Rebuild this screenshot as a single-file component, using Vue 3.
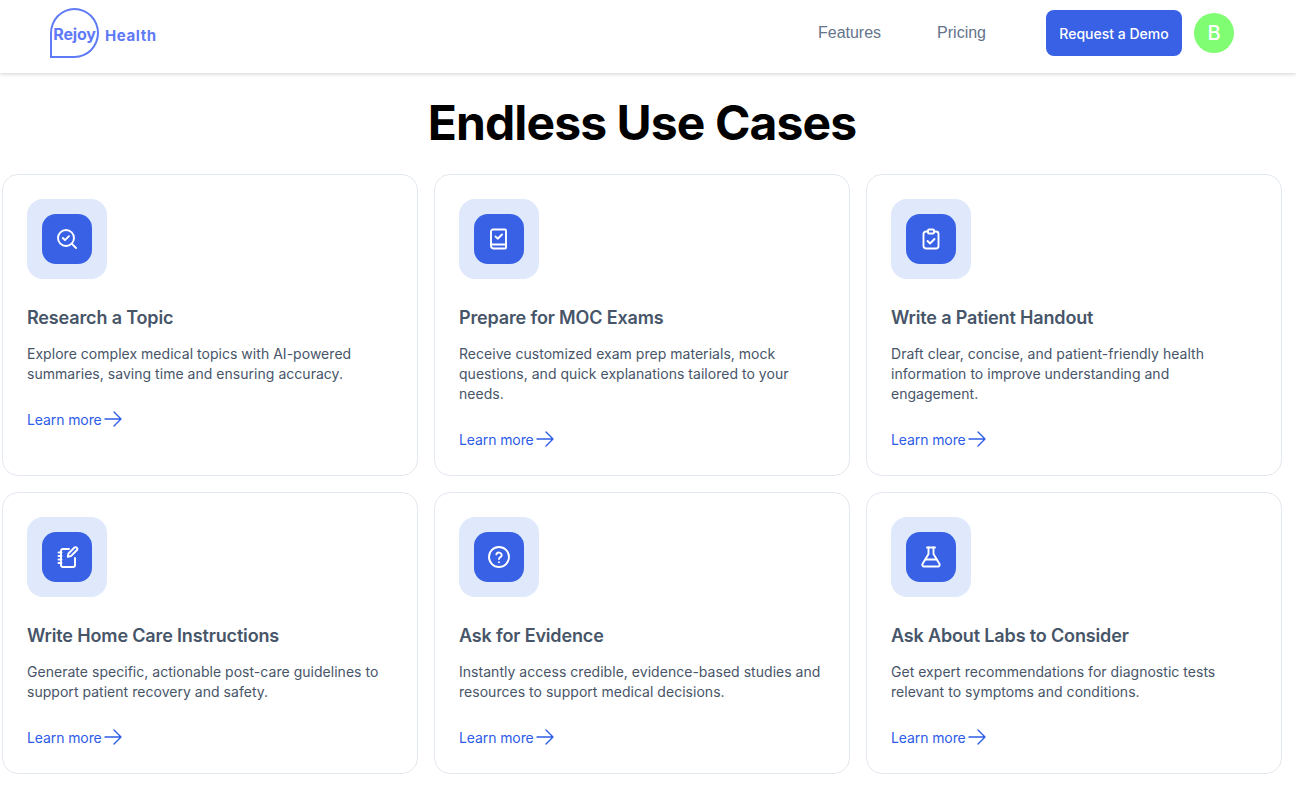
<template>
  <div class="page">
    <header class="navbar">
      <a class="logo">
        <span class="bubble"><span class="bubble-text">Rejoy</span></span>
        <span class="logo-health">Health</span>
      </a>
      <nav class="links">
        <a>Features</a>
        <a>Pricing</a>
      </nav>
      <button class="demo-btn">Request a Demo</button>
      <span class="avatar">B</span>
    </header>

    <h1>Endless Use Cases</h1>

    <section class="cards">
      <article v-for="card in cards" :key="card.title" class="card">
        <div class="icon-outer">
          <div class="icon-inner">
            <svg width="24" height="24" viewBox="0 0 24 24" fill="none" stroke="#fff" stroke-width="1.9" stroke-linecap="round" stroke-linejoin="round">
              <path v-for="d in card.icon" :key="d" :d="d" />
            </svg>
          </div>
        </div>
        <h3>{{ card.title }}</h3>
        <p>{{ card.text }}</p>
        <a class="learn">
          Learn more
          <svg width="18" height="16" viewBox="0 0 18 16" fill="none" stroke="#2f5ce8" stroke-width="1.4" stroke-linecap="round" stroke-linejoin="round">
            <path d="M1 8h16M10 1l7 7-7 7" />
          </svg>
        </a>
      </article>
    </section>
  </div>
</template>

<script setup>
const cards = [
  {
    title: 'Research a Topic',
    text: 'Explore complex medical topics with AI-powered summaries, saving time and ensuring accuracy.',
    icon: [
      'M11 3a8 8 0 1 0 0 16 8 8 0 0 0 0-16z',
      'M21 21l-4.300-4.300',
      'M7.800 11l2.200 2.200 4-4'
    ]
  },
  {
    title: 'Prepare for MOC Exams',
    text: 'Receive customized exam prep materials, mock questions, and quick explanations tailored to your needs.',
    icon: [
      'M6 2.500h12a1 1 0 0 1 1 1v17a1 1 0 0 1-1 1H6.500A2.500 2.500 0 0 1 4 19V4.500a2 2 0 0 1 2-2z',
      'M4 17.500h15',
      'M8.500 9.500l2.200 2.200 4.300-4.200'
    ]
  },
  {
    title: 'Write a Patient Handout',
    text: 'Draft clear, concise, and patient-friendly health information to improve understanding and engagement.',
    icon: [
      'M9 4.500H7a2.500 2.500 0 0 0-2.500 2.500v12A2.500 2.500 0 0 0 7 21.500h10a2.500 2.500 0 0 0 2.500-2.500V7A2.500 2.500 0 0 0 17 4.500h-2',
      'M10 2.500h4a1 1 0 0 1 1 1v2a1 1 0 0 1-1 1h-4a1 1 0 0 1-1-1v-2a1 1 0 0 1 1-1z',
      'M8.500 14l2.500 2.500 4.500-4.500'
    ]
  },
  {
    title: 'Write Home Care Instructions',
    text: 'Generate specific, actionable post-care guidelines to support patient recovery and safety.',
    icon: [
      'M14 4H8a2 2 0 0 0-2 2v14a2 2 0 0 0 2 2h10a2 2 0 0 0 2-2v-7',
      'M3.500 7.500h3M3.500 11h3M3.500 14.500h3M3.500 18h3',
      'M19.500 2.500a1.800 1.800 0 0 1 2.500 2.500l-6 6-3.300.8.800-3.300z'
    ]
  },
  {
    title: 'Ask for Evidence',
    text: 'Instantly access credible, evidence-based studies and resources to support medical decisions.',
    icon: [
      'M12 2a10 10 0 1 0 0 20 10 10 0 0 0 0-20z',
      'M9.300 9.300a2.800 2.800 0 0 1 5.400.9c0 1.800-2.700 2.300-2.700 3.800',
      'M12 17.200v.1'
    ]
  },
  {
    title: 'Ask About Labs to Consider',
    text: 'Get expert recommendations for diagnostic tests relevant to symptoms and conditions.',
    icon: [
      'M8 2.500h8',
      'M9.500 2.500v6.500L3.500 19a1.700 1.700 0 0 0 1.500 2.500h14a1.700 1.700 0 0 0 1.500-2.500L14.500 9V2.500',
      'M6.500 14.500h11'
    ]
  }
]
</script>

<style>
html,
body {
  background: #fff;
}
</style>

<style scoped>
.page {
  font-family: Inter, "Liberation Sans", sans-serif;
  color: #000;
}

.navbar {
  display: flex;
  align-items: center;
  height: 73px;
  padding: 0 62px 7px 50px;
  box-sizing: border-box;
  background: #fff;
  box-shadow: 0 1px 4px rgba(0, 0, 0, 0.18);
}

.logo {
  display: flex;
  align-items: center;
  color: #5f7af6;
  font-weight: 700;
}

.bubble {
  width: 49px;
  height: 50px;
  box-sizing: border-box;
  padding-top: 2px;
  border: 2px solid #5f7af6;
  border-radius: 50% 50% 50% 0;
  display: flex;
  align-items: center;
  justify-content: center;
}

.bubble-text {
  font-size: 16px;
  letter-spacing: -0.2px;
}

.logo-health {
  font-size: 15px;
  margin: 5px 0 0 6px;
  letter-spacing: 0.6px;
}

.links {
  display: flex;
  gap: 56px;
  margin-left: auto;
  margin-right: 60px;
  font-family: "Liberation Sans", sans-serif;
  font-size: 16px;
  color: #64748b;
}

.demo-btn {
  width: 136px;
  height: 46px;
  border: none;
  border-radius: 8px;
  background: #3861e5;
  color: #fff;
  font-family: inherit;
  font-size: 14px;
  font-weight: 500;
}

.avatar {
  width: 40px;
  height: 40px;
  margin-left: 12px;
  border-radius: 50%;
  background: #80fd72;
  color: #fff;
  font-size: 20px;
  font-weight: 500;
  display: flex;
  align-items: center;
  justify-content: center;
}

h1 {
  margin: 0;
  padding: 24px 14px 0 2px;
  height: 101px;
  box-sizing: border-box;
  text-align: center;
  font-size: 48px;
  line-height: 52px;
  font-weight: 700;
  letter-spacing: -0.9px;
}

.cards {
  display: grid;
  grid-template-columns: repeat(3, 416px);
  gap: 16px;
  padding-left: 2px;
}

.card {
  box-sizing: border-box;
  padding: 24px 24px 26px;
  border: 1px solid #e2e8f0;
  border-radius: 16px;
}

.icon-outer {
  width: 80px;
  height: 80px;
  border-radius: 16px;
  background: #dfe9fb;
  display: flex;
  align-items: center;
  justify-content: center;
}

.icon-inner {
  width: 50px;
  height: 50px;
  border-radius: 14px;
  background: #3861e5;
  display: flex;
  align-items: center;
  justify-content: center;
}

.card h3 {
  margin: 25px 0 0;
  font-size: 18px;
  line-height: 28px;
  font-weight: 600;
  color: #475569;
  letter-spacing: -0.15px;
}

.card p {
  margin: 12px 0 0;
  font-size: 14px;
  line-height: 20px;
  color: #475569;
  letter-spacing: 0.03px;
}

.learn {
  display: flex;
  align-items: center;
  gap: 2px;
  margin-top: 25px;
  height: 20px;
  font-size: 14px;
  color: #2f5ce8;
  letter-spacing: -0.1px;
}
</style>
